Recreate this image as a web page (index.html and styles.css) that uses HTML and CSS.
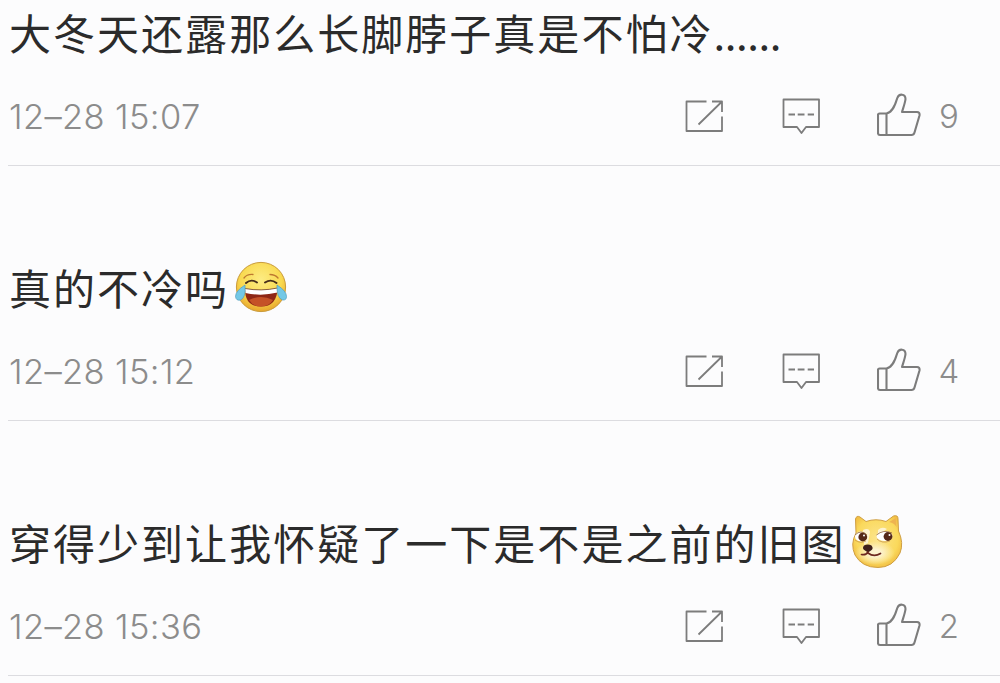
FILE: index.html
```html
<!DOCTYPE html>
<html lang="zh-CN">
<head>
  <meta charset="UTF-8" />
  <title>评论</title>
  <link rel="stylesheet" href="styles.css">
</head>
<body>
  <!-- shared icons -->
  <svg class="sprite" width="0" height="0">
    <symbol id="icon-share" viewBox="0 0 40 44">
      <path d="M21.5 8.500H1.500v29.500h35.500V23.500M27 8.500h10V19M13.500 31.500 36.500 9" />
    </symbol>
    <symbol id="icon-comment" viewBox="0 0 40 44">
      <path d="M1.500 6.500h35.500v27.500H24l-4.500 6-4.500-6H1.500z" />
      <path d="M6.500 21.500h6.500M15.700 21.500h6.800M25.700 21.500h6.300" />
    </symbol>
    <symbol id="icon-like" viewBox="0 0 46 44">
      <path d="M9.500 20.500H2.500q-1.500 0-1.500 1.500V40q0 2 2 2H34.500q2.300 0 3-2.500L42.500 22.500Q43 19 40 19H25C26.500 14 28.200 9.500 28.500 6C28.500.5 22 .3 20.300 5C18.500 11 16 19 9.500 20.500zM9.500 20.500V42" />
    </symbol>
  </svg>

  <ul class="comments">
    <li class="comment">
      <p class="text">大冬天还露那么长脚脖子真是不怕冷<span class="dots">......</span></p>
      <div class="meta">
        <span class="time">12–28 15:07</span>
        <div class="actions">
          <svg class="icon share"><use href="#icon-share" /></svg>
          <svg class="icon reply"><use href="#icon-comment" /></svg>
          <svg class="icon like"><use href="#icon-like" /></svg>
          <span class="count">9</span>
        </div>
      </div>
    </li>

    <li class="comment">
      <p class="text">真的不冷吗<svg class="emoji" viewBox="0 0 54 56">
          <defs>
            <radialGradient id="face" cx=".5" cy=".35" r=".65">
              <stop offset="0" stop-color="#fdec83" />
              <stop offset=".65" stop-color="#f9d94f" />
              <stop offset="1" stop-color="#e8a62c" />
            </radialGradient>
          </defs>
          <circle cx="27" cy="28" r="24.600" fill="url(#face)" stroke="#c99b3b" />
          <path d="M10 19q3-4 9-3.500M36 15.500q5 0 8 3.500" fill="none" stroke="#bd7830" stroke-width="1.300" stroke-linecap="round" />
          <path d="M12 24q5-4.500 11-.5M31 23.500q6-4 11.500.5" fill="none" stroke="#49301b" stroke-width="1.900" stroke-linecap="round" />
          <path d="M11 30q16 3 32.500-.5Q43 47.500 27 47.500T11 30z" fill="#8e2715" />
          <path d="M15 41q12-6 24 0-4 6.500-12 6.500T15 41z" fill="#c55227" />
          <path d="M11 29.500q16 3 32.500-.5v4.500q-16 4-32 .5z" fill="#fff" />
          <path d="M11 29.500q16 3 32.500-.5" fill="none" stroke="#6b3a26" stroke-width=".8" />
          <path d="M11 26Q1.500 32 1.500 37.500q.5 4.500 5 3.500 5.500-2 4.500-15z" fill="#73c8e6" stroke="#549ebd" stroke-width=".7" />
          <path d="M43 26q9.500 6 9.500 11.500 0 4-4 3.500-6-2-5.500-15z" fill="#73c8e6" stroke="#549ebd" stroke-width=".7" />
        </svg></p>
      <div class="meta">
        <span class="time">12–28 15:12</span>
        <div class="actions">
          <svg class="icon share"><use href="#icon-share" /></svg>
          <svg class="icon reply"><use href="#icon-comment" /></svg>
          <svg class="icon like"><use href="#icon-like" /></svg>
          <span class="count">4</span>
        </div>
      </div>
    </li>

    <li class="comment">
      <p class="text">穿得少到让我怀疑了一下是不是之前的旧图<svg class="emoji doge" viewBox="0 0 54 56">
          <defs>
            <radialGradient id="fur" cx=".5" cy=".45" r=".6">
              <stop offset="0" stop-color="#fce48c" />
              <stop offset=".7" stop-color="#fad95c" />
              <stop offset="1" stop-color="#f0b93f" />
            </radialGradient>
            <radialGradient id="muzzle">
              <stop offset=".3" stop-color="#fdf3cf" />
              <stop offset="1" stop-color="#fdf3cf" stop-opacity="0" />
            </radialGradient>
          </defs>
          <path d="M5 19 4.500 5Q5.500 1 9 3L15 7.500Q25 4 35 7.500l7.500-5.500Q47 .5 47 5l.5 12Q53 29 49 39 42 53.500 27 53.500 11 53.500 4 41-1 30 5 19z" fill="url(#fur)" stroke="#cf9f43" />
          <path d="M38 8q5-3 7-4l.5 9q-2-4-7.500-5z" fill="#eeb350" />
          <ellipse cx="24" cy="39" rx="20" ry="12" fill="url(#muzzle)" />
          <path d="M12 16q6-3 7 2l-2 11-4 2zM27 16q4-4 9-1l-9 6z" fill="#fdf3cf" />
          <ellipse cx="10" cy="22.500" rx="6" ry="5" fill="#fff" />
          <ellipse cx="33.500" cy="22" rx="8" ry="5" fill="#fff" />
          <circle cx="11.800" cy="23" r="4.400" fill="#542819" />
          <circle cx="37" cy="22.500" r="4.400" fill="#542819" />
          <path d="M4 21q6-6 12 0M25.500 21q7-6 15.500-2" fill="none" stroke="#8e6031" stroke-width=".8" />
          <path d="M4 26q5 4 11 1M26 25q5 5 13 2" fill="none" stroke="#c18e4b" stroke-width=".7" />
          <circle cx="13" cy="21.500" r="1" fill="#fff" />
          <circle cx="38.500" cy="21" r="1" fill="#fff" />
          <path d="M13 31.500q4-2 7.500 0 2.500 3-.5 5l-3 2-3-2q-3.500-2-1-5z" fill="#3f201b" />
          <path d="M17 38q-2 3.500-6.500 2.500M17 39q6 4.500 12.500.5" fill="none" stroke="#6e2a20" stroke-width="1.700" stroke-linecap="round" />
        </svg></p>
      <div class="meta">
        <span class="time">12–28 15:36</span>
        <div class="actions">
          <svg class="icon share"><use href="#icon-share" /></svg>
          <svg class="icon reply"><use href="#icon-comment" /></svg>
          <svg class="icon like"><use href="#icon-like" /></svg>
          <span class="count">2</span>
        </div>
      </div>
    </li>
  </ul>
</body>
</html>
```

FILE: styles.css
```css
* {
  box-sizing: border-box;
}
body {
  margin: 0;
  height: 683px;
  overflow: hidden;
  background: #fcfcfd;
  font-family: Inter, 'Noto Sans CJK SC', sans-serif;
}
.sprite {
  display: block;
}
.comments {
  list-style: none;
  margin: -89px 0 0 8px;
  padding: 0;
}
.comment {
  height: 255px;
  padding-top: 91px;
  border-bottom: 1px solid #dcdce0;
}
.text {
  display: flex;
  align-items: center;
  height: 60px;
  margin: 0;
  padding-left: 1px;
  font-family: 'Noto Sans CJK SC', sans-serif;
  font-size: 42px;
  letter-spacing: 2.03px;
  line-height: 60px;
  white-space: nowrap;
  color: #2b2b2b;
}
.dots {
  letter-spacing: -0.4px;
}
.emoji {
  width: 54px;
  height: 56px;
  margin-left: 5px;
}
.meta {
  display: flex;
  justify-content: space-between;
  align-items: center;
  height: 44px;
  margin-top: 31px;
  padding-right: 40px;
  color: #8c8c8c;
  font-size: 34.5px;
  font-weight: 300;
}
.time {
  padding: 2px 0 0 1px;
  letter-spacing: 0.35px;
}
.actions {
  display: flex;
  align-items: center;
}
.icon {
  width: 40px;
  height: 44px;
  fill: none;
  stroke: #7c7c7c;
  stroke-width: 1.8;
  stroke-linejoin: round;
}
.reply {
  margin-left: 57px;
}
.like {
  width: 46px;
  margin-left: 55px;
  stroke-width: 2.1;
}
.count {
  width: 22px;
  margin-left: 15px;
  padding-top: 2px;
  text-align: center;
  font-size: 33px;
}
```
